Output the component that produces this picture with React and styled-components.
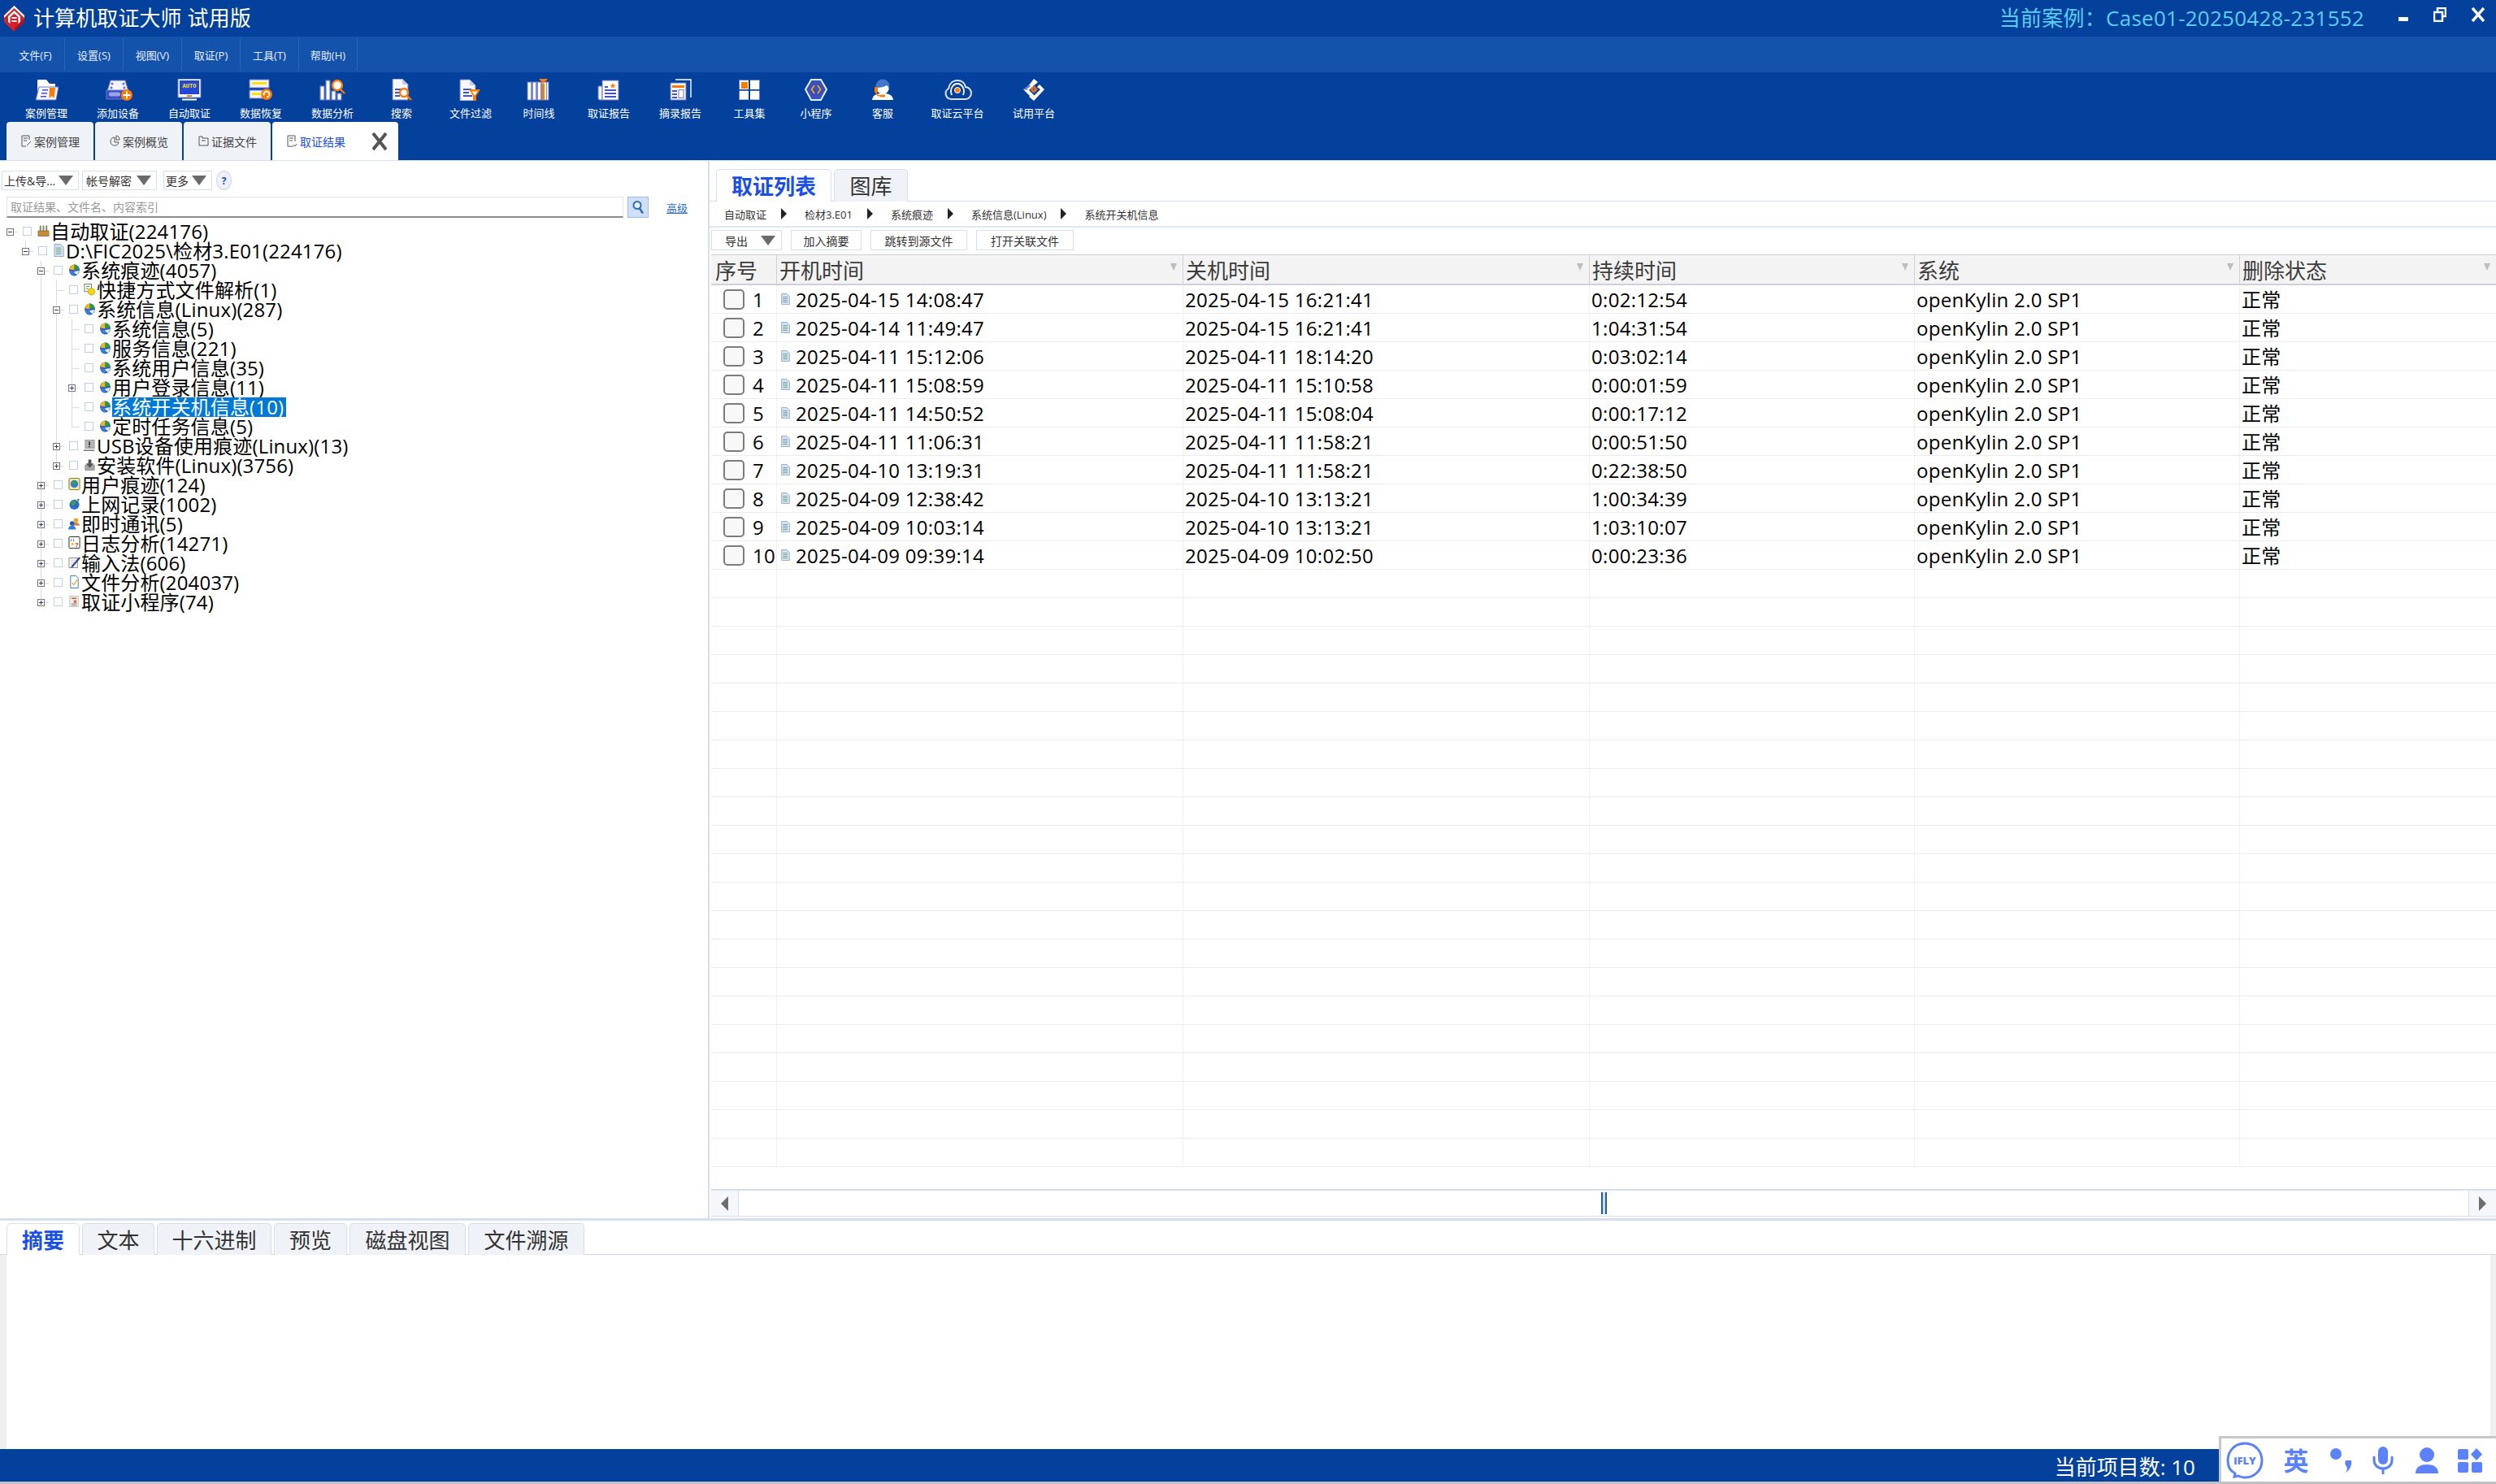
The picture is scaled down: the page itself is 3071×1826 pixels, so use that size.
import React from 'react';
import styled, { createGlobalStyle } from 'styled-components';

const FONT = `"Open Sans", "Noto Sans CJK SC", sans-serif`;

const GlobalStyle = createGlobalStyle`
    html, body {
        margin: 0;
        padding: 0;
        background: #fff;
        overflow: hidden;
    }
    * {
        box-sizing: border-box;
    }
`;

const Page = styled.div`
    position: relative;
    width: 3071px;
    height: 1826px;
    display: flex;
    flex-direction: column;
    font-family: ${FONT};
    color: #000;
    background: #fff;
    overflow: hidden;
`;

/* ---------- header ---------- */
const Header = styled.header`
    background: #03419d;
    height: 197px;
    flex: none;
    display: flex;
    flex-direction: column;
`;

const TitleBar = styled.div`
    height: 45px;
    display: flex;
    align-items: center;
    padding-left: 5px;
`;

const Title = styled.div`
    margin-left: 11px;
    font-size: 26px;
    line-height: 45px;
    color: #fff;
    letter-spacing: 0.1px;
    white-space: pre;
`;

const CaseName = styled.div`
    margin-left: auto;
    font-size: 26px;
    line-height: 45px;
    letter-spacing: 0.25px;
    color: #5ccdf0;
    white-space: pre;
`;

const WinButtons = styled.div`
    display: flex;
    align-items: flex-start;
    margin-left: 42px;
    margin-right: 14px;
    height: 45px;
    padding-top: 9px;
    gap: 31px;
`;

const MenuBar = styled.nav`
    height: 44px;
    background: #1353ac;
    display: flex;
    align-items: center;
    padding-left: 8px;
`;

const MenuItem = styled.div`
    width: 72px;
    height: 40px;
    display: flex;
    align-items: center;
    justify-content: center;
    font-size: 13px;
    color: #e8eef8;
    border-right: 1px solid #2a64b6;
`;

const ToolBar = styled.div`
    height: 61px;
    display: flex;
    padding-left: 13px;
`;

const Tool = styled.div`
    width: ${p => p.$w}px;
    display: flex;
    flex-direction: column;
    align-items: center;
    padding-top: 8px;
`;

const ToolIcon = styled.svg`
    width: 40px;
    height: 27px;
    display: block;
`;

const ToolLabel = styled.div`
    margin-top: 4px;
    font-size: 13px;
    line-height: 22px;
    color: #fff;
    white-space: nowrap;
`;

const TabRow = styled.div`
    height: 47px;
    display: flex;
    padding-left: 8px;
    gap: 2px;
    align-items: flex-end;
`;

const MainTab = styled.div`
    width: ${p => p.$w}px;
    height: 47px;
    display: flex;
    align-items: center;
    padding-left: ${p => p.$pad}px;
    gap: 3px;
    border-radius: 4px 4px 0 0;
    background: ${p => (p.$active ? '#fff' : '#eff2f7')};
    color: ${p => (p.$active ? '#1a50e8' : '#444')};
    font-size: 14px;
`;

const CloseMark = styled.svg`
    margin-left: auto;
    margin-right: 14px;
    width: 18px;
    height: 22px;
`;

/* ---------- main ---------- */
const Main = styled.div`
    height: 1305px;
    flex: none;
    display: flex;
    border-top: 1px solid #d5dfef;
    border-bottom: 3px solid #d5dfef;
`;

const LeftPane = styled.aside`
    width: 873px;
    flex: none;
    border-right: 2px solid #d5dfef;
    padding-top: 12px;
`;

const LeftTools = styled.div`
    display: flex;
    align-items: center;
    height: 24px;
    padding-left: 2px;
`;

const DropButton = styled.div`
    width: ${p => p.$w}px;
    height: 24px;
    margin-right: ${p => p.$mr}px;
    border: 1px solid #d5dfef;
    display: flex;
    align-items: center;
    justify-content: space-between;
    padding: 0 6px 0 ${p => p.$pl ?? 2}px;
    font-size: 14px;
    color: #333;
    white-space: nowrap;
`;

const Caret = styled.span`
    flex: none;
    width: 0;
    height: 0;
    border-left: 9px solid transparent;
    border-right: 9px solid transparent;
    border-top: 12px solid #6a6a6a;
`;

const HelpDot = styled.div`
    width: 19px;
    height: 24px;
    margin-left: 4px;
    border: 1px solid #ccd6e8;
    border-radius: 50%;
    background: #eef2f8;
    color: #1f4aa8;
    font-size: 12px;
    font-weight: 700;
    display: flex;
    align-items: center;
    justify-content: center;
`;

const SearchRow = styled.div`
    display: flex;
    align-items: center;
    height: 26px;
    margin-top: 8px;
    padding-left: 8px;
`;

const SearchInput = styled.div`
    width: 759px;
    height: 26px;
    border: 1px solid #e4e4e4;
    border-bottom: 2px solid #8c8c8c;
    font-size: 14px;
    line-height: 23px;
    padding-left: 4px;
    color: #9a9a9a;
`;

const SearchButton = styled.div`
    width: 26px;
    height: 26px;
    margin-left: 5px;
    background: #cfe0f7;
    border: 1px solid #9dbde9;
    display: flex;
    align-items: center;
    justify-content: center;
`;

const AdvancedLink = styled.a`
    margin-left: 22px;
    font-size: 13px;
    color: #2a6ed0;
    text-decoration: underline;
`;

const Tree = styled.div`
    margin-top: 5px;
`;

const TreeRow = styled.div`
    height: 24px;
    display: flex;
    align-items: center;
`;

const Indent = styled.span`
    flex: none;
    position: relative;
    width: 19px;
    height: 24px;
    &::before {
        content: ${p => (p.$line ? '""' : 'none')};
        position: absolute;
        left: 12px;
        top: 0;
        bottom: 0;
        width: 1px;
        background: #dcdcdc;
    }
`;

const Branch = styled.span`
    flex: none;
    position: relative;
    width: 24px;
    height: 24px;
    display: flex;
    align-items: center;
    &::before {
        content: ${p => (p.$up || p.$down ? '""' : 'none')};
        position: absolute;
        left: 12px;
        width: 1px;
        top: ${p => (p.$up ? '0' : '12px')};
        bottom: ${p => (p.$down ? '0' : '12px')};
        background: #dcdcdc;
    }
    &::after {
        content: '';
        position: absolute;
        left: 12px;
        right: 2px;
        top: 12px;
        height: 1px;
        background: #dcdcdc;
    }
`;

const Toggle = styled.span`
    position: absolute;
    z-index: 1;
    left: 8px;
    top: 8px;
    width: 9px;
    height: 9px;
    background: #fff;
    border: 1px solid #777;
    &::before {
        content: '';
        position: absolute;
        left: 1px;
        right: 1px;
        top: 3px;
        height: 1px;
        background: #1f3f8f;
    }
    &::after {
        content: ${p => (p.$plus ? '""' : 'none')};
        position: absolute;
        top: 1px;
        bottom: 1px;
        left: 3px;
        width: 1px;
        background: #1f3f8f;
    }
`;

const TreeCheck = styled.span`
    flex: none;
    width: 11px;
    height: 11px;
    margin: -2px 7px 0 4px;
    border: 1px solid #bcd0f5;
    background: #fff;
`;

const TreeIcon = styled.svg`
    flex: none;
    width: 15px;
    height: 16px;
    margin-right: 1px;
    margin-top: -3px;
`;

const TreeText = styled.span`
    font-size: 24px;
    line-height: 24px;
    height: 24px;
    white-space: nowrap;
    padding-right: ${p => (p.$sel ? '3px' : '0')};
    letter-spacing: 0.15px;
    color: ${p => (p.$sel ? '#fff' : '#000')};
    background: ${p => (p.$sel ? '#0078d7' : 'transparent')};
`;

const RightPane = styled.section`
    flex: 1;
    min-width: 0;
    padding: 10px 0 2px;
    display: flex;
    flex-direction: column;
`;

const ListTabs = styled.div`
    height: 40px;
    display: flex;
    gap: 3px;
    padding-left: 8px;
    border-bottom: 1px solid #d5dfef;
`;

const ListTab = styled.div`
    width: ${p => p.$w}px;
    height: 40px;
    display: flex;
    align-items: center;
    justify-content: center;
    padding-bottom: 2px;
    font-size: 26px;
    border: 1px solid #d5dfef;
    border-bottom: none;
    border-radius: 5px 5px 0 0;
    font-weight: ${p => (p.$active ? 700 : 400)};
    color: ${p => (p.$active ? '#1a50e8' : '#333')};
    background: ${p => (p.$active ? '#fff' : '#eff2f7')};
`;

const Crumbs = styled.div`
    height: 32px;
    display: flex;
    align-items: center;
    padding-left: 18px;
    border-bottom: 2px solid #dfe7f3;
    font-size: 13px;
    color: #333;
    white-space: nowrap;
`;

const CrumbArrow = styled.span`
    width: 0;
    height: 0;
    margin: 0 22px 0 18px;
    border-top: 7px solid transparent;
    border-bottom: 7px solid transparent;
    border-left: 7px solid #222;
`;

const Actions = styled.div`
    display: flex;
    height: 25px;
    margin-top: 3px;
    padding-left: 2px;
    gap: 11px;
`;

const ActionButton = styled.div`
    width: ${p => p.$w}px;
    height: 25px;
    border: 1px solid #d5dfef;
    display: flex;
    align-items: center;
    justify-content: ${p => (p.$drop ? 'space-between' : 'center')};
    padding: ${p => (p.$drop ? '0 7px 0 16px' : '0')};
    font-size: 14px;
    color: #333;
    white-space: nowrap;
`;

const GridTable = styled.div`
    margin: 5px 0 0 2px;
    flex: 1;
    min-height: 0;
    display: flex;
    flex-direction: column;
`;

const columns = `80px 500px 500px 400px 400px 316px`;

const HeadRow = styled.div`
    height: 38px;
    flex: none;
    display: grid;
    grid-template-columns: ${columns};
    background: #f3f3f3;
    border-top: 1px solid #cfd0dc;
    border-bottom: 2px solid #cfd0dc;
`;

const HeadCell = styled.div`
    display: flex;
    align-items: center;
    justify-content: space-between;
    padding: 3px 7px 0 ${p => (p.$first ? 5 : 3)}px;
    font-size: 26px;
    line-height: 32px;
    color: #3c3c3c;
    border-left: ${p => (p.$first ? 'none' : '1px solid #cfd0dc')};
`;

const FilterMark = styled.span`
    width: 0;
    height: 0;
    margin-bottom: 9px;
    border-left: 4px solid transparent;
    border-right: 4px solid transparent;
    border-top: 9px solid #bdbdbd;
`;

const Body = styled.div`
    flex: 1;
    min-height: 0;
    overflow: hidden;
`;

const Row = styled.div`
    height: 35px;
    display: grid;
    grid-template-columns: ${columns};
    border-bottom: 1px solid #ececec;
`;

const Cell = styled.div`
    display: flex;
    align-items: center;
    padding: 2px 0 0 ${p => (p.$first ? 3 : 2)}px;
    font-size: 24px;
    line-height: 32px;
    letter-spacing: 0.3px;
    white-space: nowrap;
    border-left: ${p => (p.$first ? 'none' : '1px solid #f1f1f1')};
`;

const RowCheck = styled.span`
    flex: none;
    width: 26px;
    height: 25px;
    margin: -2px 10px 0 12px;
    border: 2px solid #7c7c7c;
    border-radius: 5px;
    background: #f8f8f8;
`;

const DocIcon = styled.svg`
    flex: none;
    width: 13px;
    height: 16px;
    margin: -2px 6px 0 2px;
`;

const ScrollBar = styled.div`
    flex: none;
    height: 34px;
    display: flex;
    border-top: 2px solid #d5dfef;
    border-bottom: 1px solid #d5dfef;
`;

const ScrollButton = styled.div`
    width: 33px;
    display: flex;
    align-items: center;
    justify-content: center;
    background: #f6f7fa;
`;

const ScrollArrow = styled.span`
    width: 0;
    height: 0;
    border-top: 9px solid transparent;
    border-bottom: 9px solid transparent;
    ${p => (p.$left ? 'border-right: 9px solid #6d6d6d;' : 'border-left: 9px solid #6d6d6d;')}
`;

const ScrollTrack = styled.div`
    flex: 1;
    display: flex;
    align-items: center;
    padding-left: 1061px;
    border-left: 1px solid #d5dfef;
    border-right: 1px solid #d5dfef;
`;

const ScrollThumb = styled.div`
    width: 7px;
    height: 27px;
    border-left: 2px solid #1f5ea8;
    border-right: 2px solid #1f5ea8;
    background: #cfe0f7;
`;

/* ---------- bottom ---------- */
const BottomTabs = styled.div`
    height: 42px;
    flex: none;
    padding: 3px 0 0 8px;
    display: flex;
    gap: 3px;
    border-bottom: 1px solid #d0d4e6;
`;

const BottomTab = styled.div`
    width: ${p => p.$w}px;
    height: 39px;
    display: flex;
    align-items: center;
    justify-content: center;
    font-size: 26px;
    border: 1px solid #d5dfef;
    border-bottom: none;
    border-radius: 5px 5px 0 0;
    font-weight: ${p => (p.$active ? 700 : 400)};
    color: ${p => (p.$active ? '#1a50e8' : '#333')};
    background: ${p => (p.$active ? '#fff' : '#eff2f7')};
`;

const Detail = styled.div`
    flex: 1;
    background: #fff;
    border-left: 8px solid #efefef;
    border-right: 7px solid #efefef;
`;

const StatusBar = styled.footer`
    height: 40px;
    flex: none;
    background: #03419d;
    color: #fff;
    display: flex;
    align-items: center;
    justify-content: flex-end;
    padding: 2px 370px 0 0;
    font-size: 26px;
`;

const BottomEdge = styled.div`
    height: 3px;
    flex: none;
    background: #c1c0c5;
`;

const ImeBar = styled.div`
    position: absolute;
    right: 0;
    bottom: 3px;
    width: 341px;
    height: 56px;
    background: #fff;
    border: 3px solid #c8c8c8;
    border-bottom: none;
    border-right: none;
    display: flex;
    align-items: center;
    padding-left: 4px;
`;

const ImeSlot = styled.div`
    width: ${p => p.$w}px;
    display: flex;
    justify-content: center;
    color: #5b82fb;
    font-size: 31px;
    font-weight: 700;
    line-height: 40px;
`;

/* ---------- drawings ---------- */
const P = '#6b78c8';
const B = '#3f51d8';
const O = '#ff7a00';

const toolIcons = {
    folder: (
        <>
            <path d="M9 1h11l4 5h7v4H11l-3 15H9z" fill="#fff" />
            <path d="M11 10h24l-3 16H7z" fill="#f7f8ff" stroke={P} strokeWidth="1" />
            <path d="M15 13h7v1.6h-7zM14 17h7v1.6h-7zM13 21h7v1.6h-7z" fill={B} />
            <path d="M24 11h7l-1.5 13-2.5-3-3.5 3z" fill={O} />
        </>
    ),
    disk: (
        <>
            <path d="M7 15l4-13h18l4 13z" fill="#f3f4fc" stroke={P} />
            <circle cx="13" cy="6" r="1.6" fill={P} />
            <circle cx="27" cy="6" r="1.6" fill={P} />
            <circle cx="12" cy="11" r="1.6" fill={P} />
            <circle cx="28" cy="11" r="1.6" fill={P} />
            <rect x="6" y="14" width="26" height="11" fill="#3c4fc0" stroke={P} />
            <rect x="9" y="16.5" width="14" height="5" rx="2" fill="#98a4e4" />
            <circle cx="31" cy="20" r="7" fill={O} />
            <path d="M30 15.5h2V19h3.500v2H32v3.500h-2V21h-3.500v-2H30z" fill="#fff" />
        </>
    ),
    monitor: (
        <>
            <rect x="6" y="0" width="28" height="23" fill="#fff" stroke={P} />
            <rect x="8" y="2" width="24" height="17" fill="#2447d8" />
            <text x="20" y="11" textAnchor="middle" fontFamily="Liberation Mono, monospace" fontSize="7" fontWeight="700" fill="#ffe600">AUTO</text>
            <rect x="17" y="20" width="6" height="2" fill={O} />
            <rect x="11" y="24.500" width="18" height="2" fill="#fff" />
        </>
    ),
    recover: (
        <>
            <rect x="6" y="1" width="24" height="10" fill="#f2f3fb" stroke={P} />
            <rect x="9" y="4" width="18" height="3" fill="#ffe100" />
            <rect x="6" y="14" width="22" height="10" fill="#f2f3fb" stroke={P} />
            <rect x="9" y="17" width="10" height="3" fill="#ffe100" />
            <circle cx="27" cy="19" r="7" fill={O} />
            <path d="M23.500 19a3.500 3.500 0 1 1 3.500 3.500" fill="none" stroke="#fff" strokeWidth="1.800" />
            <path d="M21.500 18h4l-2 3z" fill="#fff" />
        </>
    ),
    chart: (
        <>
            <rect x="5" y="9" width="5" height="17" fill="#fff" stroke={P} strokeWidth="1.200" />
            <rect x="12" y="2" width="5" height="24" fill="#fff" stroke={P} strokeWidth="1.200" />
            <rect x="19" y="15" width="5" height="11" fill="#fff" stroke={P} strokeWidth="1.200" />
            <rect x="26" y="18" width="5" height="8" fill="#fff" stroke={P} strokeWidth="1.200" />
            <circle cx="26" cy="8" r="6" fill="#fff" stroke={O} strokeWidth="2.400" />
            <path d="M30 13l5 5" stroke={O} strokeWidth="2.400" />
        </>
    ),
    search: (
        <>
            <path d="M9 0h12l7 7v19H9z" fill="#f8f9ff" stroke={P} />
            <path d="M21 0v7h7z" fill="#c4caec" />
            <path d="M12 12h8v2h-8zM12 16h5v2h-5zM12 20h6v2h-6z" fill={B} />
            <circle cx="23" cy="17" r="5" fill="#fff" stroke={O} strokeWidth="2.400" />
            <path d="M27 21l5 5" stroke={O} strokeWidth="2.400" />
        </>
    ),
    filter: (
        <>
            <path d="M7 1h12l7 7v19H7z" fill="#f8f9ff" stroke={P} />
            <path d="M19 1v7h7z" fill="#c4caec" />
            <path d="M11 12h10v2H11zM11 16h7v2h-7zM11 20h11v2H11z" fill={B} />
            <path d="M18 13h14l-5 8v6h-4v-6z" fill={O} />
            <path d="M21.500 15.500h7l-3.500 5z" fill="#fff" />
        </>
    ),
    timeline: (
        <>
            <rect x="6" y="4" width="26" height="22" fill="#fff" stroke={P} />
            <path d="M10 4h3v22h-3zM16 4h3v22h-3zM22 4h2v22h-2zM29 4h1v22h-1z" fill="#7d8ad2" />
            <path d="M24 6h3v20h-3z" fill={O} />
            <path d="M20 0h11l-5.500 6z" fill={O} />
        </>
    ),
    report: (
        <>
            <path d="M7 9h5v17H9a2 2 0 0 1-2-2z" fill="#f3f4fc" stroke={P} />
            <rect x="12" y="2" width="20" height="24" fill="#fff" stroke={P} />
            <path d="M25 5l1 2.500h2.500l-2 1.700.8 2.600-2.300-1.500-2.300 1.500.8-2.600-2-1.700H24z" fill={O} />
            <path d="M15 9h4v2h-4zM15 13h14v2H15zM15 17h14v2H15zM15 21h14v2H15z" fill={B} />
        </>
    ),
    summary: (
        <>
            <path d="M14 1h19v22" fill="none" stroke="#fff" strokeWidth="1.400" />
            <rect x="8" y="5" width="19" height="21" fill="#f8f9ff" stroke={P} />
            <rect x="10" y="8" width="15" height="3" fill={O} />
            <path d="M10 14h6v2h-6zM10 18h6v2h-6zM10 22h6v2h-6z" fill={B} />
            <rect x="18" y="13.500" width="6" height="10" fill="#fff" stroke={P} />
        </>
    ),
    tools: (
        <>
            <rect x="7" y="1" width="26" height="25" fill={P} />
            <rect x="8" y="2" width="11" height="11" fill="#fff" />
            <rect x="10" y="4" width="8" height="8" fill={O} />
            <rect x="21" y="2" width="11" height="11" fill="#fff" />
            <rect x="8" y="14.500" width="11" height="11" fill="#fff" />
            <rect x="21" y="14.500" width="11" height="11" fill="#fff" />
            <path d="M19 0h2v27h-2zM7 13h26v1.500H7z" fill="#03419d" />
        </>
    ),
    applet: (
        <>
            <path d="M14 1h12l7 12-7 13H14L7 13z" fill="#3c4fc0" stroke="#dff3fb" strokeWidth="2" />
            <path d="M18 8l-3.500 5 3.500 5M22 8l3.500 5-3.500 5" fill="none" stroke="#f5a300" strokeWidth="1.800" />
        </>
    ),
    service: (
        <>
            <path d="M7 26c1-7 6-8 13-8s12 1 13 8z" fill="#fff" />
            <circle cx="20" cy="9" r="8.500" fill="#3f78c8" />
            <path d="M13 11c4 0 9-1 12-3 2 1 2.500 3 2.500 5a7.500 7.500 0 0 1-14.500 0z" fill="#fff" />
            <rect x="10" y="10" width="4" height="7" rx="1" fill={O} />
            <path d="M12 17c0 3 3 4 6 4" fill="none" stroke={O} strokeWidth="1.400" />
            <rect x="17" y="19.500" width="6" height="3" rx="1" fill={O} />
        </>
    ),
    cloud: (
        <>
            <path d="M12 25a7 7 0 0 1-3-13c1-6 5-10 11-10 5 0 9 3 10 8a7.500 7.500 0 0 1-1 15z" fill="#03419d" stroke="#dfe3f6" strokeWidth="2" />
            <path d="M13 20c-3-8 2-14 7-14s10 6 7 14" fill="none" stroke="#fff" strokeWidth="1.800" />
            <circle cx="20" cy="14" r="3.500" fill={O} stroke="#fff" />
        </>
    ),
    trial: (
        <>
            <path d="M20 0l5 4-10 9-1 1-4-1z" fill="#fff" />
            <path d="M7 13l7-6 2 2-5 4z" fill={P} />
            <path d="M33 13l-6-6-3 3 4 3-8 8-3-2-3 3 6 5z" fill="#fff" />
            <path d="M7 13l13 13 3-3-9-9z" fill="#fff" />
            <path d="M20 8l5 5-5 5-5-5z" fill={O} />
            <path d="M15 13h10M20 8v10" stroke="#3c4fc0" strokeWidth=".8" />
        </>
    ),
};

const treeIcons = {
    box: (
        <>
            <path d="M3 1h2v8H3zM7 1h2v8H7zM11 1h2v8h-2z" fill="#7a8a6a" />
            <rect x="1" y="8" width="14" height="7" fill="#c98a3a" stroke="#7a4a1a" strokeWidth=".6" />
        </>
    ),
    doc: (
        <>
            <path d="M2 0h8l4 4v12H2z" fill="#d4e3f3" stroke="#7f9cbc" strokeWidth=".9" />
            <path d="M4 5h7M4 7.500h7M4 10h7M4 12.500h7" stroke="#5f8f6f" strokeWidth=".9" />
        </>
    ),
    win: (
        <>
            <ellipse cx="8" cy="8.500" rx="6.800" ry="7.500" fill="#2b5fc0" />
            <path d="M8 1C4 1 2 4 2 7.500l6 1z" fill="#f0b820" />
            <path d="M8 1c3 0 5.500 2.500 6.500 6L8 8z" fill="#2c9c3c" />
            <path d="M2 9.500l6 .5v6c-3 0-5-2.500-6-6.500z" fill="#3a7ce0" />
            <path d="M14.500 9L8 10v2l4 3z" fill="#dfeee0" />
        </>
    ),
    shortcut: (
        <>
            <rect x="1" y="1" width="9" height="10" fill="#fff" stroke="#555" strokeWidth=".8" />
            <path d="M3 4h5M3 7h3" stroke="#2c8c4c" />
            <circle cx="10" cy="11" r="4.500" fill="#f5d800" stroke="#a08000" strokeWidth=".6" />
        </>
    ),
    usb: (
        <>
            <rect x="2" y="1" width="12" height="11" fill="#b5b5b5" stroke="#777" strokeWidth=".6" />
            <rect x="6.500" y="3" width="2" height="5" fill="#444" />
            <rect x="6.500" y="9" width="2" height="1.500" fill="#444" />
            <rect x="0" y="14" width="14" height="1" fill="#222" />
        </>
    ),
    install: (
        <>
            <rect x="2" y="8" width="12" height="7" fill="#a9a9a9" stroke="#666" strokeWidth=".6" />
            <path d="M6 1h4v5h3l-5 6-5-6h3z" fill="#555" />
        </>
    ),
    user: (
        <>
            <rect x="1" y="0" width="14" height="15" rx="1.500" fill="#f3e3b0" stroke="#8a7010" />
            <circle cx="8" cy="7.500" r="5" fill="#2c7cd0" />
            <path d="M4 6c2-3 6-3 7 0l-3 3z" fill="#34a050" />
        </>
    ),
    globe: (
        <>
            <circle cx="8" cy="9" r="6.500" fill="#2c6cc8" />
            <path d="M3 7c2-3 5-4 7-3l-1 4-3 3z" fill="#3ca050" />
            <path d="M12 1l3 1-3 4z" fill="#3a8a5a" />
        </>
    ),
    chat: (
        <>
            <circle cx="10" cy="4" r="3" fill="#f0a030" />
            <path d="M5 11c0-3 3-4 5-4s5 1 5 4z" fill="#e08030" />
            <circle cx="5" cy="8" r="3" fill="#1f5fc0" />
            <path d="M0 16c0-3 2-5 5-5s5 2 5 5z" fill="#2f7fd8" />
        </>
    ),
    log: (
        <>
            <rect x="1" y="0" width="14" height="15" rx="1" fill="#fff" stroke="#222" />
            <path d="M4 3v3M7 3v3" stroke="#2c6cc8" />
            <rect x="4" y="8" width="3" height="3" fill="#f0c020" />
            <text x="11" y="13" textAnchor="middle" fontFamily="Liberation Sans, sans-serif" fontSize="8" fontWeight="700" fill="#b02020">?</text>
        </>
    ),
    ime: (
        <>
            <rect x="1" y="2" width="11" height="13" fill="#fff" stroke="#666" strokeWidth=".8" />
            <path d="M3 5h6M3 8h5M3 11h4" stroke="#bbb" />
            <path d="M4 13L14 1l2 1.500L6 14l-2.500 1z" fill="#2a3fa0" />
        </>
    ),
    file: (
        <>
            <path d="M3 0h7l3 3v13H3z" fill="#fff" stroke="#2c7cd0" />
            <path d="M5 9l2 3 5-7" fill="none" stroke="#e0a020" strokeWidth="1.200" />
        </>
    ),
    app: (
        <>
            <rect x="2" y="1" width="11" height="14" fill="#f0efe8" stroke="#aaa" strokeWidth=".7" />
            <path d="M4 4h7" stroke="#d04030" strokeWidth="1.400" />
            <circle cx="9" cy="8" r="2" fill="#e06040" />
            <path d="M4 11h7M4 13h7" stroke="#888" />
        </>
    ),
};

const tools = [
    ['folder', '案例管理', 88],
    ['disk', '添加设备', 88],
    ['monitor', '自动取证', 88],
    ['recover', '数据恢复', 88],
    ['chart', '数据分析', 88],
    ['search', '搜索', 82],
    ['filter', '文件过滤', 88],
    ['timeline', '时间线', 80],
    ['report', '取证报告', 92],
    ['summary', '摘录报告', 84],
    ['tools', '工具集', 86],
    ['applet', '小程序', 78],
    ['service', '客服', 86],
    ['cloud', '取证云平台', 98],
    ['trial', '试用平台', 90],
];

// depth, text, icon, toggle, through-lines (indent columns), up, down
const treeData = [
    { d: 0, t: '自动取证(224176)', i: 'box', tg: 'minus' },
    { d: 1, t: 'D:\\FIC2025\\检材3.E01(224176)', i: 'doc', tg: 'minus', up: 1 },
    { d: 2, t: '系统痕迹(4057)', i: 'win', tg: 'minus', up: 1, down: 1 },
    { d: 3, t: '快捷方式文件解析(1)', i: 'shortcut', up: 1, down: 1, thru: [2] },
    { d: 3, t: '系统信息(Linux)(287)', i: 'win', tg: 'minus', up: 1, down: 1, thru: [2] },
    { d: 4, t: '系统信息(5)', i: 'win', up: 1, down: 1, thru: [2, 3] },
    { d: 4, t: '服务信息(221)', i: 'win', up: 1, down: 1, thru: [2, 3] },
    { d: 4, t: '系统用户信息(35)', i: 'win', up: 1, down: 1, thru: [2, 3] },
    { d: 4, t: '用户登录信息(11)', i: 'win', tg: 'plus', up: 1, down: 1, thru: [2, 3] },
    { d: 4, t: '系统开关机信息(10)', i: 'win', up: 1, down: 1, thru: [2, 3], sel: true },
    { d: 4, t: '定时任务信息(5)', i: 'win', up: 1, thru: [2, 3] },
    { d: 3, t: 'USB设备使用痕迹(Linux)(13)', i: 'usb', tg: 'plus', up: 1, down: 1, thru: [2] },
    { d: 3, t: '安装软件(Linux)(3756)', i: 'install', tg: 'plus', up: 1, thru: [2] },
    { d: 2, t: '用户痕迹(124)', i: 'user', tg: 'plus', up: 1, down: 1 },
    { d: 2, t: '上网记录(1002)', i: 'globe', tg: 'plus', up: 1, down: 1 },
    { d: 2, t: '即时通讯(5)', i: 'chat', tg: 'plus', up: 1, down: 1 },
    { d: 2, t: '日志分析(14271)', i: 'log', tg: 'plus', up: 1, down: 1 },
    { d: 2, t: '输入法(606)', i: 'ime', tg: 'plus', up: 1, down: 1 },
    { d: 2, t: '文件分析(204037)', i: 'file', tg: 'plus', up: 1, down: 1 },
    { d: 2, t: '取证小程序(74)', i: 'app', tg: 'plus', up: 1 },
];

const rows = [
    ['2025-04-15 14:08:47', '2025-04-15 16:21:41', '0:02:12:54'],
    ['2025-04-14 11:49:47', '2025-04-15 16:21:41', '1:04:31:54'],
    ['2025-04-11 15:12:06', '2025-04-11 18:14:20', '0:03:02:14'],
    ['2025-04-11 15:08:59', '2025-04-11 15:10:58', '0:00:01:59'],
    ['2025-04-11 14:50:52', '2025-04-11 15:08:04', '0:00:17:12'],
    ['2025-04-11 11:06:31', '2025-04-11 11:58:21', '0:00:51:50'],
    ['2025-04-10 13:19:31', '2025-04-11 11:58:21', '0:22:38:50'],
    ['2025-04-09 12:38:42', '2025-04-10 13:13:21', '1:00:34:39'],
    ['2025-04-09 10:03:14', '2025-04-10 13:13:21', '1:03:10:07'],
    ['2025-04-09 09:39:14', '2025-04-09 10:02:50', '0:00:23:36'],
];

const crumbs = ['自动取证', '检材3.E01', '系统痕迹', '系统信息(Linux)', '系统开关机信息'];

const Logo = () => (
    <svg width="25" height="32" viewBox="0 0 25 32">
        <path d="M12.500 0L25 12v8L12.500 32 0 20v-8z" fill="#d8202a" />
        <path d="M12.500 0L25 12v3L12.500 3 0 15v-3z" fill="#fff" />
        <path d="M5 13l7.500-7L20 13v7l-2.500 2v-8l-5-4.500-5 4.500v8L5 20z" fill="#fff" />
        <path d="M9.500 14h6v2h-6zM9.500 18h6v2h-6z" fill="#fff" />
        <path d="M12.500 32L25 20v-4l-12.500 12z" fill="#a81420" />
    </svg>
);

const SearchGlyph = () => (
    <svg width="14" height="18" viewBox="0 0 14 18">
        <circle cx="6" cy="6.500" r="4.500" fill="#e6f0fb" stroke="#2d6cb5" strokeWidth="2" />
        <path d="M9 10.500l4 6" stroke="#2d6cb5" strokeWidth="2.500" />
    </svg>
);

function TabGlyph({ kind }) {
    return (
        <svg width="13" height="15" viewBox="0 0 13 15" style={{ flex: 'none' }} fill="none" stroke="#555" strokeWidth="1">
            {kind === 'edit' && <path d="M10 6V1H1v13h5M3 4h5M3 7h4M7 13l5-5" />}
            {kind === 'pie' && <path d="M6 3a5 5 0 1 0 5 6H6zM8 1a5 5 0 0 1 4 5H8z" />}
            {kind === 'folder' && <path d="M1 2h4v2h7v9H1zM4 7h5" />}
            {kind === 'result' && <path d="M10 8V1H1v13h7M3 4h5M3 7h4M8 12l2 2 2-3" />}
        </svg>
    );
}

const ImeIcons = () => (
    <>
        <ImeSlot $w={52}>
            <svg width="46" height="46" viewBox="0 0 46 46">
                <path d="M23 2c12 0 21 9 21 21s-9 21-21 21c-3 0-6-1-8-2l-5 1 1-4C5 36 2 30 2 23 2 11 11 2 23 2z" fill="none" stroke="#5b82fb" strokeWidth="3" />
                <text x="23" y="28" textAnchor="middle" fontFamily="Open Sans, sans-serif" fontSize="13" fontWeight="800" fill="#5b82fb">iFLY</text>
            </svg>
        </ImeSlot>
        <ImeSlot $w={76}>英</ImeSlot>
        <ImeSlot $w={38}>
            <svg width="28" height="32" viewBox="0 0 28 32">
                <circle cx="7" cy="8" r="7" fill="#5b82fb" />
                <path d="M19 16h7c1 6-2 12-7 15 2-3 2-6 1-8-2-1-2-5-1-7z" fill="#5b82fb" />
            </svg>
        </ImeSlot>
        <ImeSlot $w={68}>
            <svg width="26" height="34" viewBox="0 0 26 34">
                <rect x="7" y="0" width="12" height="22" rx="6" fill="#5b82fb" />
                <path d="M2 13v4c0 6 5 10 11 10s11-4 11-10v-4" fill="none" stroke="#5b82fb" strokeWidth="3" strokeLinecap="round" />
                <path d="M13 27v6" stroke="#5b82fb" strokeWidth="3" strokeLinecap="round" />
            </svg>
        </ImeSlot>
        <ImeSlot $w={42}>
            <svg width="28" height="32" viewBox="0 0 28 32">
                <circle cx="14" cy="9" r="9" fill="#5b82fb" />
                <path d="M0 32c0-8 6-11 14-11s14 3 14 11z" fill="#5b82fb" />
            </svg>
        </ImeSlot>
        <ImeSlot $w={66}>
            <svg width="30" height="30" viewBox="0 0 30 30">
                <rect x="0" y="1" width="13" height="13" rx="2" fill="#5b82fb" />
                <rect x="0" y="17" width="13" height="13" rx="2" fill="#5b82fb" />
                <rect x="17" y="17" width="13" height="13" rx="2" fill="#5b82fb" />
                <path d="M23 0l7 7.500-7 7.500-7-7.500z" fill="#5b82fb" />
            </svg>
        </ImeSlot>
    </>
);

const heads = ['序号', '开机时间', '关机时间', '持续时间', '系统', '删除状态'];

export default function App() {
    return (
        <Page>
            <GlobalStyle />
            <Header>
                <TitleBar>
                    <Logo />
                    <Title>计算机取证大师 试用版</Title>
                    <CaseName>当前案例：Case01-20250428-231552</CaseName>
                    <WinButtons>
                        <svg width="12" height="28" viewBox="0 0 12 28"><rect y="12" width="12" height="5" fill="#fff" /></svg>
                        <svg width="16" height="18" viewBox="0 0 16 18" fill="none" stroke="#fff" strokeWidth="2.500"><path d="M5 5V1h10v10h-4" /><rect x="1" y="6" width="10" height="11" /></svg>
                        <svg width="16" height="18" viewBox="0 0 16 18" stroke="#fff" strokeWidth="3.500"><path d="M1 1l14 16M15 1L1 17" /></svg>
                    </WinButtons>
                </TitleBar>
                <MenuBar>
                    {['文件(F)', '设置(S)', '视图(V)', '取证(P)', '工具(T)', '帮助(H)'].map(m => (
                        <MenuItem key={m}>{m}</MenuItem>
                    ))}
                </MenuBar>
                <ToolBar>
                    {tools.map(([icon, label, w]) => (
                        <Tool key={label} $w={w}>
                            <ToolIcon viewBox="0 0 40 27">{toolIcons[icon]}</ToolIcon>
                            <ToolLabel>{label}</ToolLabel>
                        </Tool>
                    ))}
                </ToolBar>
                <TabRow>
                    <MainTab $w={107} $pad={18}><TabGlyph kind="edit" />案例管理</MainTab>
                    <MainTab $w={107} $pad={18}><TabGlyph kind="pie" />案例概览</MainTab>
                    <MainTab $w={107} $pad={18}><TabGlyph kind="folder" />证据文件</MainTab>
                    <MainTab $w={155} $pad={18} $active>
                        <TabGlyph kind="result" />取证结果
                        <CloseMark viewBox="0 0 18 22" stroke="#555" strokeWidth="4"><path d="M1 1l16 20M17 1L1 21" /></CloseMark>
                    </MainTab>
                </TabRow>
            </Header>

            <Main>
                <LeftPane>
                    <LeftTools>
                        <DropButton $w={95} $mr={4}>上传&导...<Caret /></DropButton>
                        <DropButton $w={92} $mr={8} $pl={4}>帐号解密<Caret /></DropButton>
                        <DropButton $w={60} $mr={1}>更多<Caret /></DropButton>
                        <HelpDot>?</HelpDot>
                    </LeftTools>
                    <SearchRow>
                        <SearchInput>取证结果、文件名、内容索引</SearchInput>
                        <SearchButton><SearchGlyph /></SearchButton>
                        <AdvancedLink>高级</AdvancedLink>
                    </SearchRow>
                    <Tree>
                        {treeData.map(n => (
                            <TreeRow key={n.t}>
                                {Array.from({ length: n.d }, (_, c) => (
                                    <Indent key={c} $line={n.thru && n.thru.includes(c)} />
                                ))}
                                <Branch $up={n.up} $down={n.down}>
                                    {n.tg && <Toggle $plus={n.tg === 'plus'} />}
                                </Branch>
                                <TreeCheck />
                                <TreeIcon viewBox="0 0 16 16">{treeIcons[n.i]}</TreeIcon>
                                <TreeText $sel={n.sel}>{n.t}</TreeText>
                            </TreeRow>
                        ))}
                    </Tree>
                </LeftPane>

                <RightPane>
                    <ListTabs>
                        <ListTab $w={142} $active>取证列表</ListTab>
                        <ListTab $w={91}>图库</ListTab>
                    </ListTabs>
                    <Crumbs>
                        {crumbs.map((c, i) => (
                            <React.Fragment key={c}>
                                {i > 0 && <CrumbArrow />}
                                {c}
                            </React.Fragment>
                        ))}
                    </Crumbs>
                    <Actions>
                        <ActionButton $w={87} $drop>导出<Caret /></ActionButton>
                        <ActionButton $w={87}>加入摘要</ActionButton>
                        <ActionButton $w={119}>跳转到源文件</ActionButton>
                        <ActionButton $w={120}>打开关联文件</ActionButton>
                    </Actions>
                    <GridTable>
                        <HeadRow>
                            {heads.map((h, i) => (
                                <HeadCell key={h} $first={i === 0}>
                                    {h}
                                    {i > 0 && <FilterMark />}
                                </HeadCell>
                            ))}
                        </HeadRow>
                        <Body>
                            {rows.map((r, i) => (
                                <Row key={i}>
                                    <Cell $first><RowCheck />{i + 1}</Cell>
                                    <Cell>
                                        <DocIcon viewBox="0 0 16 16">{treeIcons.doc}</DocIcon>
                                        {r[0]}
                                    </Cell>
                                    <Cell>{r[1]}</Cell>
                                    <Cell>{r[2]}</Cell>
                                    <Cell>openKylin 2.0 SP1</Cell>
                                    <Cell>正常</Cell>
                                </Row>
                            ))}
                            {Array.from({ length: 21 }, (_, i) => (
                                <Row key={i}>
                                    <Cell $first /><Cell /><Cell /><Cell /><Cell /><Cell />
                                </Row>
                            ))}
                        </Body>
                        <ScrollBar>
                            <ScrollButton><ScrollArrow $left /></ScrollButton>
                            <ScrollTrack><ScrollThumb /></ScrollTrack>
                            <ScrollButton><ScrollArrow /></ScrollButton>
                        </ScrollBar>
                    </GridTable>
                </RightPane>
            </Main>

            <BottomTabs>
                <BottomTab $w={90} $active>摘要</BottomTab>
                <BottomTab $w={89}>文本</BottomTab>
                <BottomTab $w={141}>十六进制</BottomTab>
                <BottomTab $w={90}>预览</BottomTab>
                <BottomTab $w={143}>磁盘视图</BottomTab>
                <BottomTab $w={143}>文件溯源</BottomTab>
            </BottomTabs>
            <Detail />
            <StatusBar>当前项目数: 10</StatusBar>
            <BottomEdge />
            <ImeBar><ImeIcons /></ImeBar>
        </Page>
    );
}
